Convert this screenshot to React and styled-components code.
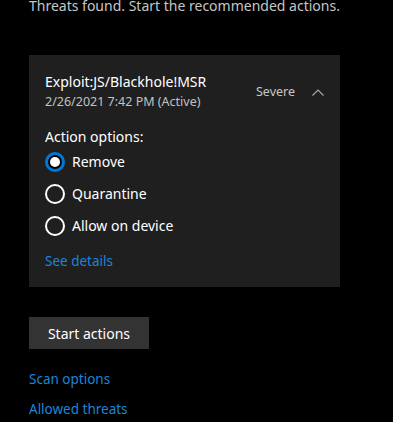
import React, { useState } from "react"
import styled, { createGlobalStyle } from "styled-components"

const Global = createGlobalStyle`
	html, body {
		margin: 0;
		padding: 0;
		background: #000;
		overflow: hidden;
	}
	body {
		font-family: "Noto Sans", "Open Sans", sans-serif;
	}
`

const options = ["Remove", "Quarantine", "Allow on device"]

const App = () => {
	const [choice, setChoice] = useState("Remove")

	return (
		<Page>
			<Global />
			<Intro>Threats found. Start the recommended actions.</Intro>
			<Card>
				<Header>
					<div>
						<ThreatName>Exploit:JS/Blackhole!MSR</ThreatName>
						<ThreatDate>2/26/2021 7:42 PM (Active)</ThreatDate>
					</div>
					<Severity>
						Severe
						<svg width="12" height="8" viewBox="0 0 12 8">
							<path d="M0.5 7.5 L6 2 L11.5 7.5" fill="none" stroke="#a8a8a8" strokeWidth="1.2" />
						</svg>
					</Severity>
				</Header>
				<OptionsLabel>Action options:</OptionsLabel>
				<RadioList>
					{options.map(o => (
						<RadioRow key={o} onClick={() => setChoice(o)}>
							<Radio checked={choice === o} />
							{o}
						</RadioRow>
					))}
				</RadioList>
				<Link>See details</Link>
			</Card>
			<Button>Start actions</Button>
			<Links>
				<Link>Scan options</Link>
				<Link>Allowed threats</Link>
			</Links>
		</Page>
	)
}

const Page = styled.div`
	padding-left: 29px;
	height: 422px;
	background: #000;
	color: #fff;
`

const Intro = styled.div`
	font-size: 14px;
	line-height: 20px;
	color: #c6c6c6;
	margin-top: -4px;
`

const Card = styled.div`
	margin-top: 39px;
	width: 311px;
	box-sizing: border-box;
	background: #1f1f1f;
	padding: 17px 16px 16px 16px;
`

const Header = styled.div`
	display: flex;
	justify-content: space-between;
	align-items: center;
`

const ThreatName = styled.div`
	font-size: 14px;
	line-height: 20px;
	color: #fff;
`

const ThreatDate = styled.div`
	font-size: 12.5px;
	line-height: 20px;
	color: #c2c2c2;
`

const Severity = styled.div`
	display: flex;
	align-items: center;
	gap: 17px;
	font-size: 12.5px;
	color: #c8c8c8;
	margin-top: -1px;
`

const OptionsLabel = styled.div`
	margin-top: 15px;
	font-size: 14px;
	line-height: 20px;
	color: #fff;
`

const RadioList = styled.div`
	display: flex;
	flex-direction: column;
	gap: 12px;
	margin-top: 5px;
`

const RadioRow = styled.div`
	display: flex;
	align-items: center;
	gap: 7px;
	font-size: 14px;
	line-height: 20px;
	color: #fff;
	cursor: pointer;
`

const Radio = styled.span`
	width: 20px;
	height: 20px;
	box-sizing: border-box;
	border-radius: 50%;
	border: 2px solid ${p => (p.checked ? "#0078d7" : "#fff")};
	background: ${p => (p.checked ? "#0078d7" : "transparent")};
	display: flex;
	align-items: center;
	justify-content: center;
	&::after {
		content: "";
		width: 10px;
		height: 10px;
		border-radius: 50%;
		background: ${p => (p.checked ? "#fff" : "transparent")};
		box-shadow: ${p => (p.checked ? "0 0 0 2px #000" : "none")};
	}
`

const Link = styled.div`
	font-size: 13.5px;
	line-height: 20px;
	color: #1a86d9;
	cursor: pointer;
	${Card} & {
		margin-top: 15px;
	}
`

const Button = styled.div`
	margin-top: 30px;
	width: 120px;
	height: 32px;
	background: #333;
	color: #fff;
	font-size: 14px;
	display: flex;
	align-items: center;
	justify-content: center;
`

const Links = styled.div`
	display: flex;
	flex-direction: column;
	gap: 10px;
	margin-top: 20px;
`

export default App
